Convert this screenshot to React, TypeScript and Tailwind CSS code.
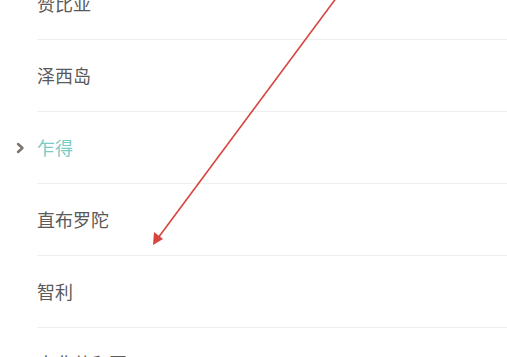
const countries = [
  { name: "赞比亚" },
  { name: "泽西岛" },
  { name: "乍得", active: true },
  { name: "直布罗陀" },
  { name: "智利" },
  { name: "中非共和国" },
];

function Chevron() {
  return (
    <svg width="9" height="12" viewBox="0 0 9 12" className="absolute left-[16px]">
      <path d="M2 2 L6.5 6 L2 10" fill="none" stroke="#7d726a" strokeWidth="2.4" strokeLinecap="round" strokeLinejoin="round" />
    </svg>
  );
}

export default function App() {
  return (
    <div
      className="relative w-[507px] h-[357px] overflow-hidden bg-white"
      style={{ fontFamily: '"Noto Sans CJK SC", "Noto Sans", sans-serif' }}
    >
      <ul className="mt-[-32px]">
        {countries.map((c) => (
          <li key={c.name} className="relative flex items-center h-[72px] pl-[37px]">
            {c.active && <Chevron />}
            <div className="flex items-center w-full h-full border-b border-[#efefef]">
              <span
                className={
                  c.active
                    ? "text-[18px] text-[#7acbc4]"
                    : "text-[18px] text-[#5a5a5a]"
                }
              >
                {c.name}
              </span>
            </div>
          </li>
        ))}
      </ul>

      {/* annotation arrow */}
      <svg className="absolute inset-0 pointer-events-none" width="507" height="357" viewBox="0 0 507 357">
        <line x1="337" y1="-3" x2="158" y2="238" stroke="#d8443e" strokeWidth="1.6" />
        <polygon points="153,245 154,232 163,239" fill="#d8443e" />
      </svg>
    </div>
  );
}
